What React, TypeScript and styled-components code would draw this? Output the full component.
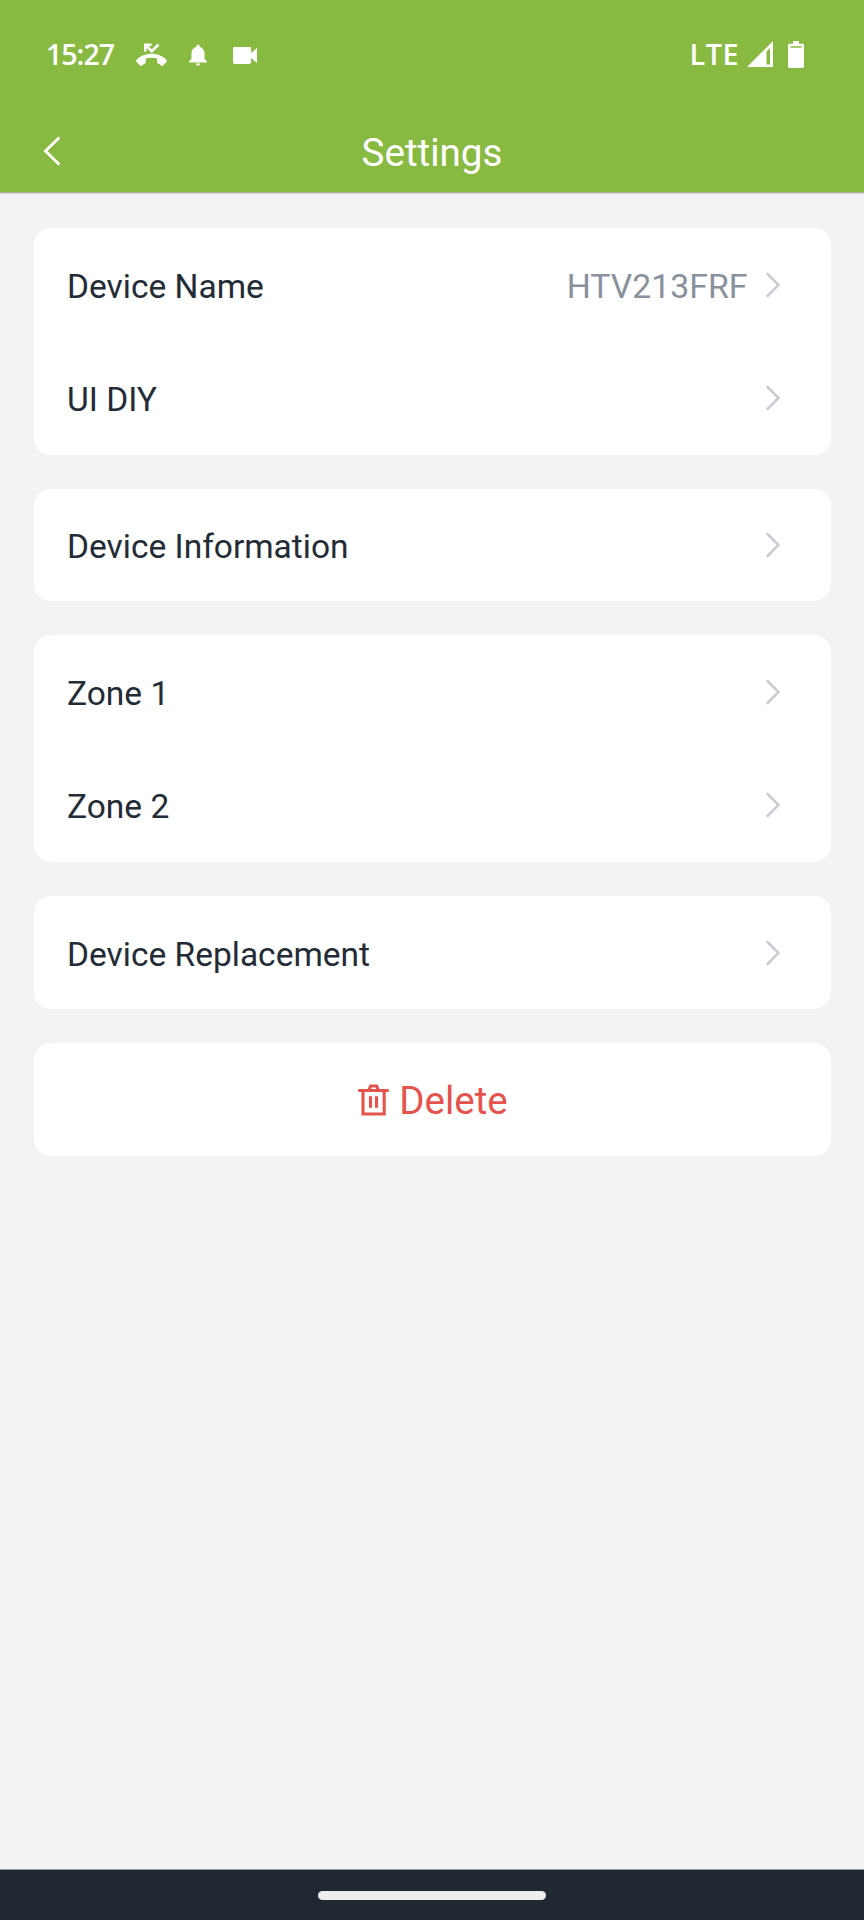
import React from 'react';
import styled, { createGlobalStyle } from 'styled-components';

const GlobalStyle = createGlobalStyle`
  * { box-sizing: border-box; }
  html, body { margin: 0; padding: 0; background: #f1f3f5; }
  body { font-family: Roboto, 'Liberation Sans', sans-serif; color: #232b36; }
  svg { display: block; flex: none; }
`;

const Screen = styled.div`
  display: flex;
  flex-direction: column;
  width: 864px;
  height: 1920px;
  background: #f1f3f5;
  overflow: hidden;
`;

const Header = styled.header`
  flex: none;
  height: 193px;
  background: #88ba42;
  color: #fff;
  border-bottom: 1px solid #adb99b;
  box-shadow: 0 1px 0 #d6d8d8;
`;

const StatusBar = styled.div`
  display: flex;
  justify-content: space-between;
  height: 110px;
  padding: 0 60px 0 46px;
`;

const StatusGroup = styled.div<{ $height?: number }>`
  display: flex;
  align-items: center;
  height: ${(p) => p.$height ?? 110}px;
`;

const Clock = styled.span`
  width: 90px;
  padding-bottom: 2px;
  font: 600 28.5px 'Open Sans', 'Noto Sans', sans-serif;
  letter-spacing: -1px;
`;

const Network = styled.span`
  margin-right: 8px;
  padding-bottom: 1px;
  font: 600 29px 'Open Sans', 'Noto Sans', sans-serif;
  letter-spacing: 0.4px;
`;

const TitleBar = styled.div`
  display: grid;
  grid-template-columns: 100px 1fr 100px;
  align-items: center;
  height: 82px;
`;

const BackButton = styled.button`
  display: flex;
  padding: 0 0 0 42px;
  border: 0;
  background: none;
  color: inherit;
`;

const Title = styled.h1`
  margin: 0;
  padding-top: 4px;
  font-size: 38.6px;
  font-weight: 400;
  line-height: 46px;
  text-align: center;
`;

const Content = styled.main`
  flex: 1;
  display: flex;
  flex-direction: column;
  gap: 34px;
  padding: 35px 33.5px 0;
`;

const Card = styled.section<{ $height: number }>`
  display: flex;
  flex-direction: column;
  height: ${(p) => p.$height}px;
  border-radius: 17px;
  background: #fff;
`;

const Row = styled.div`
  flex: 1;
  display: flex;
  align-items: center;
  padding: 0 49.5px 0 33.5px;
  font-size: 33.5px;
  line-height: 40px;
`;

const Label = styled.span`
  flex: 1;
  padding-top: 4px;
`;

const Value = styled.span`
  padding-top: 4px;
  margin-right: 17.5px;
  font-size: 33.8px;
  color: #88919c;
`;

const DeleteButton = styled.button`
  flex: 1;
  display: flex;
  align-items: center;
  justify-content: center;
  gap: 10px;
  padding: 0 0 0 2px;
  border: 0;
  background: none;
  color: #e5534d;
  font: 400 38.5px/46px Roboto, sans-serif;
`;

const DeleteLabel = styled.span`
  padding-top: 3px;
`;

const NavBar = styled.footer`
  flex: none;
  display: flex;
  justify-content: center;
  height: 51px;
  padding-top: 21px;
  border-top: 1px solid #929aa0;
  background: #222832;
`;

const HomePill = styled.div`
  width: 228px;
  height: 9px;
  border-radius: 4.5px;
  background: #eee;
`;

const MissedCallIcon = () => (
  <svg width="31" height="24" viewBox="0 0 31 24" fill="currentColor">
    <path d="M.4 17C4.300 13 9.600 10.800 15.500 10.800s11.200 2.200 15.100 6.200c.5.5.5 1.200 0 1.700l-3.600 3.900c-.5.5-1.200.5-1.700.1-1-.9-2.100-1.600-3.300-2.200-.5-.3-.8-.7-.8-1.200v-3.700c-1.800-.6-3.700-.9-5.700-.9s-3.900.3-5.700.9v3.700c0 .6-.3 1-.8 1.200-1.200.6-2.300 1.300-3.300 2.200-.5.5-1.200.4-1.700-.1L.4 18.700c-.5-.5-.5-1.200 0-1.700z" />
    <path d="M9.300 8.500V1.800h6.200M9.800 2.300l6 5.900 6.700-6.700" fill="none" stroke="currentColor" strokeWidth="2.600" />
  </svg>
);

const BellIcon = () => (
  <svg width="18" height="22" viewBox="1.500 0 17 20" fill="currentColor" style={{ marginLeft: 22 }}>
    <path d="M10 20c1.100 0 2-.9 2-2H8c0 1.100.9 2 2 2zm6.200-6.200V8.500c0-3.100-1.700-5.600-4.700-6.300v-.7C11.500.7 10.800 0 10 0S8.500.7 8.500 1.500v.7c-3 .7-4.700 3.200-4.700 6.300v5.300l-2.200 2.200v1.100h16.800V16z" />
  </svg>
);

const VideoIcon = () => (
  <svg width="24" height="17" viewBox="0 0 24 17" fill="currentColor" style={{ marginLeft: 26 }}>
    <path d="M1.500 0h15.200c.8 0 1.400.6 1.400 1.400v4.700L24 1v15l-5.900-5.100v4.700c0 .8-.6 1.400-1.400 1.400H1.500C.6 17 0 16.400 0 15.600V1.400C0 .6.6 0 1.500 0z" />
  </svg>
);

const SignalIcon = () => (
  <svg width="26" height="26" viewBox="0 0 26 26" fill="currentColor">
    <path fillRule="evenodd" d="M26 0v26H0zM23 7v16.500h-3.500V10.500z" />
  </svg>
);

const BatteryIcon = () => (
  <svg width="16" height="27" viewBox="0 0 16 27" fill="currentColor" style={{ marginLeft: 15 }}>
    <path fillRule="evenodd" d="M5 0h6v2.700h3.500c.8 0 1.500.7 1.500 1.500v21.300c0 .8-.7 1.500-1.500 1.500h-13C.7 27 0 26.300 0 25.500V4.200c0-.8.7-1.500 1.500-1.500H5zM2.500 5.200v1.500h11V5.200z" />
  </svg>
);

const BackIcon = () => (
  <svg width="20" height="30" viewBox="0 0 20 30" fill="none" stroke="currentColor" strokeWidth="2.900" strokeLinecap="round">
    <path d="M16.500 2.200L3.500 15l13 12.800" />
  </svg>
);

const ChevronIcon = () => (
  <svg width="16" height="26" viewBox="0 0 16 26" fill="none" stroke="#cbcbd4" strokeWidth="2.500" strokeLinecap="round">
    <path d="M2.500 2L13.500 13 2.500 24" />
  </svg>
);

const TrashIcon = () => (
  <svg width="31" height="32" viewBox="0 0 31 32" fill="none" stroke="currentColor" strokeWidth="3.100">
    <path d="M1.500 6.500h28" strokeLinecap="round" />
    <path d="M10.800 6.300l1.800-4.300h6L20.400 6.300M5 6.500v23.500h21.200V6.500M12.500 12.200v11.500M18.500 12.200v11.500" />
  </svg>
);

const groups: { height: number; rows: { label: string; value?: string }[] }[] = [
  { height: 227, rows: [{ label: 'Device Name', value: 'HTV213FRF' }, { label: 'UI DIY' }] },
  { height: 112, rows: [{ label: 'Device Information' }] },
  { height: 227, rows: [{ label: 'Zone 1' }, { label: 'Zone 2' }] },
  { height: 113, rows: [{ label: 'Device Replacement' }] },
];

export default function App() {
  return (
    <>
      <GlobalStyle />
      <Screen>
        <Header>
          <StatusBar>
            <StatusGroup>
              <Clock>15:27</Clock>
              <MissedCallIcon />
              <BellIcon />
              <VideoIcon />
            </StatusGroup>
            <StatusGroup $height={108}>
              <Network>LTE</Network>
              <SignalIcon />
              <BatteryIcon />
            </StatusGroup>
          </StatusBar>
          <TitleBar>
            <BackButton aria-label="Back">
              <BackIcon />
            </BackButton>
            <Title>Settings</Title>
          </TitleBar>
        </Header>
        <Content>
          {groups.map((group) => (
            <Card key={group.rows[0].label} $height={group.height}>
              {group.rows.map((row) => (
                <Row key={row.label}>
                  <Label>{row.label}</Label>
                  {row.value && <Value>{row.value}</Value>}
                  <ChevronIcon />
                </Row>
              ))}
            </Card>
          ))}
          <Card $height={113}>
            <DeleteButton>
              <TrashIcon />
              <DeleteLabel>Delete</DeleteLabel>
            </DeleteButton>
          </Card>
        </Content>
        <NavBar>
          <HomePill />
        </NavBar>
      </Screen>
    </>
  );
}
